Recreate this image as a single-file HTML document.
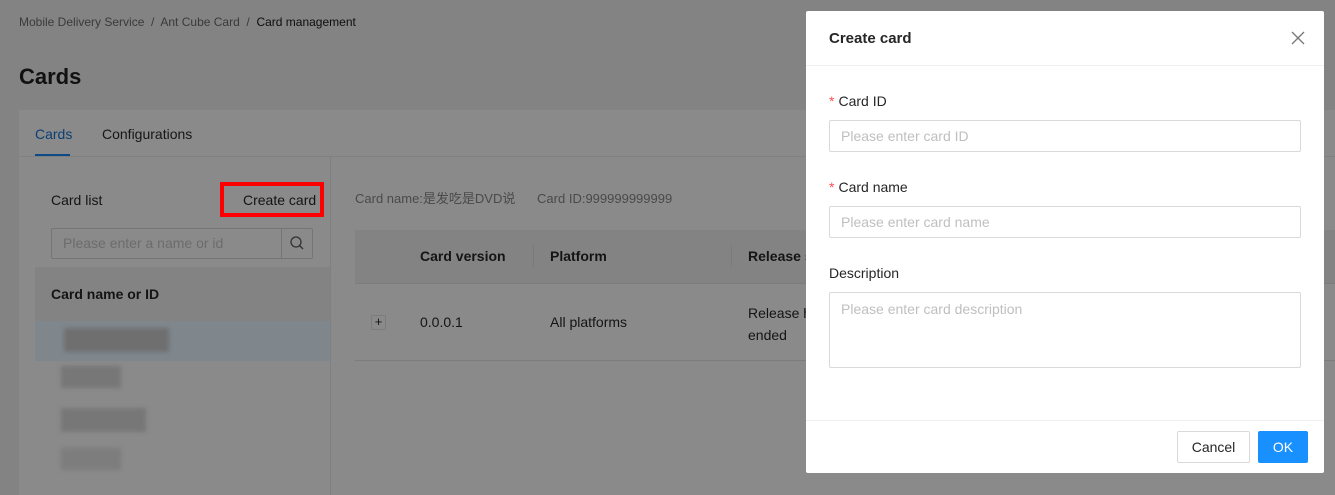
<!DOCTYPE html>
<html><head><meta charset="utf-8"><style>
*{box-sizing:border-box;margin:0;padding:0}
body{width:1335px;height:495px;overflow:hidden;background:#838383;font-family:"Liberation Sans","Noto Sans CJK SC",sans-serif;position:relative;color:#141414}
.a{position:absolute;white-space:nowrap}
.panel{position:absolute;left:19px;top:110px;width:1316px;height:385px;background:#8a8a8a}
.blur{position:absolute;background:#6f6f70;filter:blur(2px)}
.modal{position:absolute;left:806px;top:11px;width:518px;height:462px;background:#fff;border-radius:2px}
.inp{position:absolute;left:23px;width:472px;border:1px solid #d9d9d9;border-radius:2px;color:#bfbfbf;font-size:14px;padding:0 11px}
.lab{position:absolute;left:23px;font-size:14px;color:#262626}
.lab b{color:#ff4d4f;font-weight:normal;margin-right:4px}
</style></head><body>
<div class="a" style="left:19px;top:15px;font-size:12px;color:#3a3a3a">Mobile Delivery Service &nbsp;/&nbsp; Ant Cube Card &nbsp;/&nbsp; <span style="color:#0d0d0d">Card management</span></div>
<div class="a" style="left:19px;top:64px;font-size:22px;font-weight:bold;color:#111">Cards</div>
<div class="panel">
 <div style="position:absolute;left:0;top:46px;width:1316px;height:1px;background:#808080"></div>
 <div class="a" style="left:16px;top:16px;font-size:14px;color:#0b3f73">Cards</div>
 <div style="position:absolute;left:16px;top:44px;width:35px;height:2px;background:#0b4a85"></div>
 <div class="a" style="left:83px;top:16px;font-size:14px;color:#161616">Configurations</div>
 <div style="position:absolute;left:311px;top:47px;width:1px;height:338px;background:#808080"></div>
 <div class="a" style="left:32px;top:82px;font-size:14px">Card list</div>
 <div style="position:absolute;left:201px;top:72px;width:104px;height:35px;border:4px solid #ff0000"></div>
 <div class="a" style="left:224px;top:82px;font-size:14px">Create card</div>
 <div style="position:absolute;left:32px;top:118px;width:262px;height:31px;border:1px solid #757575;border-radius:2px"></div>
 <div style="position:absolute;left:262px;top:118px;width:1px;height:31px;background:#757575"></div>
 <div class="a" style="left:44px;top:125px;font-size:14px;color:#6c6c6c">Please enter a name or id</div>
 <svg class="a" style="left:270px;top:125px" width="16" height="16" viewBox="0 0 16 16"><circle cx="7" cy="7" r="5" fill="none" stroke="#333" stroke-width="1.3"/><path d="M10.5 10.5L14 14" stroke="#333" stroke-width="1.4"/></svg>
 <div style="position:absolute;left:16px;top:157px;width:295px;height:54px;background:#838383"></div>
 <div class="a" style="left:32px;top:176px;font-size:14px;font-weight:bold">Card name or ID</div>
 <div style="position:absolute;left:16px;top:211px;width:295px;height:40px;background:#7f878d"></div>
 <div class="blur" style="left:45px;top:218px;width:105px;height:24px"></div>
 <div class="blur" style="left:42px;top:256px;width:60px;height:22px;background:#777"></div>
 <div class="blur" style="left:42px;top:298px;width:85px;height:24px;background:#777"></div>
 <div class="blur" style="left:42px;top:338px;width:60px;height:22px;background:#7d7d7d"></div>
 <div class="a" style="left:336px;top:78px;font-size:13px;color:#4a4a4a">Card name:是发吃是DVD说 &nbsp;&nbsp;&nbsp;&nbsp; Card ID:999999999999</div>
 <div style="position:absolute;left:336px;top:120px;width:980px;height:54px;background:#838383;border-bottom:1px solid #7c7c7c"></div>
 <div class="a" style="left:401px;top:138px;font-size:14px;font-weight:bold">Card version</div>
 <div style="position:absolute;left:514px;top:135px;width:1px;height:22px;background:#7a7a7a"></div>
 <div class="a" style="left:531px;top:138px;font-size:14px;font-weight:bold">Platform</div>
 <div style="position:absolute;left:712px;top:135px;width:1px;height:22px;background:#7a7a7a"></div>
 <div class="a" style="left:729px;top:138px;font-size:14px;font-weight:bold">Release s</div>
 <div style="position:absolute;left:352px;top:205px;width:15px;height:15px;border:1px solid #7c7c7c;border-radius:2px;font-size:13px;line-height:12px;text-align:center">+</div>
 <div class="a" style="left:401px;top:204px;font-size:14px">0.0.0.1</div>
 <div class="a" style="left:531px;top:204px;font-size:14px">All platforms</div>
 <div class="a" style="left:729px;top:192px;font-size:14px;line-height:22px">Release h<br>ended</div>
 <div style="position:absolute;left:336px;top:250px;width:980px;height:1px;background:#7c7c7c"></div>
</div>
<div class="modal">
 <div class="a" style="left:23px;top:19px;font-size:15px;font-weight:bold;color:#262626">Create card</div>
 <svg class="a" style="left:485px;top:20px" width="14" height="14" viewBox="0 0 14 14"><path d="M1 1L13 13M13 1L1 13" stroke="#777" stroke-width="1.3"/></svg>
 <div style="position:absolute;left:0;top:54px;width:518px;height:1px;background:#f0f0f0"></div>
 <div class="lab" style="top:82px"><b>*</b>Card ID</div>
 <div class="inp" style="top:109px;height:32px;line-height:30px">Please enter card ID</div>
 <div class="lab" style="top:168px"><b>*</b>Card name</div>
 <div class="inp" style="top:195px;height:32px;line-height:30px">Please enter card name</div>
 <div class="lab" style="top:254px">Description</div>
 <div class="inp" style="top:281px;height:76px;padding-top:8px">Please enter card description</div>
 <div style="position:absolute;left:0;top:409px;width:518px;height:1px;background:#f0f0f0"></div>
 <div style="position:absolute;left:371px;top:420px;width:73px;height:32px;border:1px solid #d9d9d9;border-radius:2px;font-size:14px;color:#262626;text-align:center;line-height:30px">Cancel</div>
 <div style="position:absolute;left:452px;top:420px;width:50px;height:32px;background:#1890ff;border-radius:2px;font-size:14px;color:#fff;text-align:center;line-height:32px">OK</div>
</div>
</body></html>
